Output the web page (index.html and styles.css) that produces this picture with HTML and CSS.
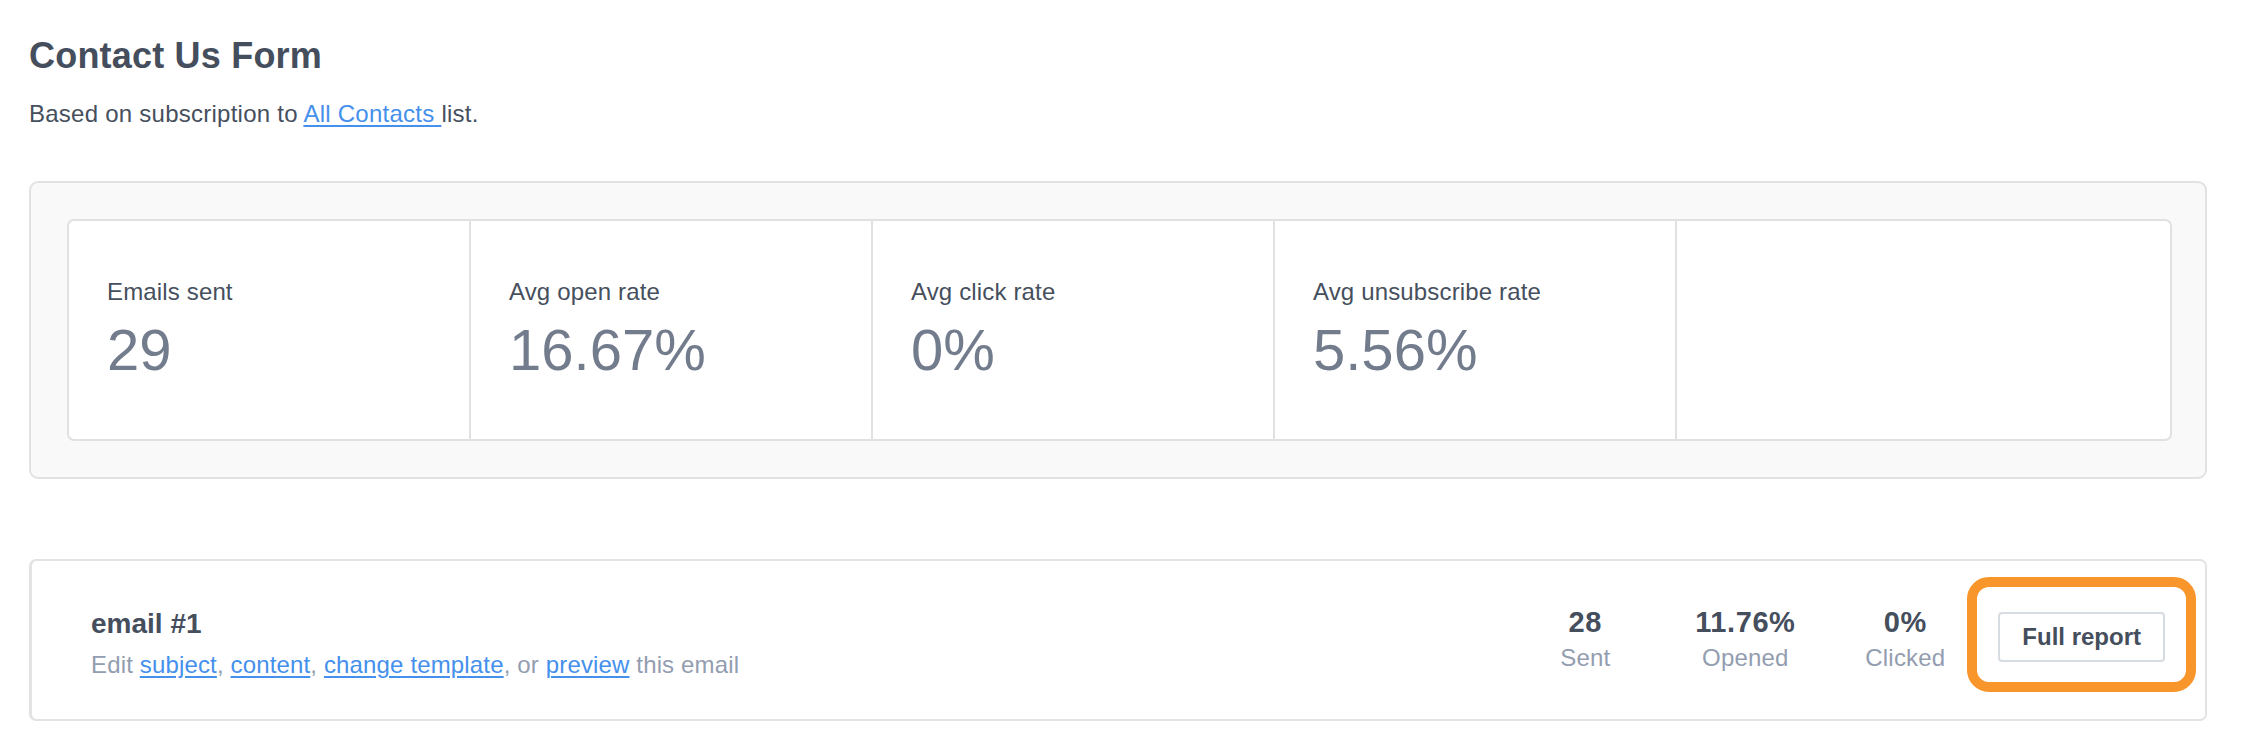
FILE: index.html
```html
<!DOCTYPE html>
<html lang="en">
<head>
<meta charset="utf-8">
<title>Contact Us Form</title>
<link rel="stylesheet" href="styles.css">
</head>
<body>
<div class="page">
  <h1 class="title">Contact Us Form</h1>
  <p class="subtitle">Based on subscription to <a href="#" class="link">All Contacts </a>list.</p>

  <section class="summary">
    <div class="stat-card">
      <div class="stat">
        <div class="stat-label">Emails sent</div>
        <div class="stat-value">29</div>
      </div>
      <div class="stat">
        <div class="stat-label">Avg open rate</div>
        <div class="stat-value">16.67%</div>
      </div>
      <div class="stat">
        <div class="stat-label">Avg click rate</div>
        <div class="stat-value">0%</div>
      </div>
      <div class="stat">
        <div class="stat-label">Avg unsubscribe rate</div>
        <div class="stat-value">5.56%</div>
      </div>
      <div class="stat stat-empty"></div>
    </div>
  </section>

  <section class="email-row">
    <div class="email-info">
      <div class="email-name">email #1</div>
      <div class="email-edit">Edit <a href="#" class="link">subject</a>, <a href="#" class="link">content</a>, <a href="#" class="link">change template</a>, or <a href="#" class="link">preview</a> this email</div>
    </div>
    <div class="email-stats">
      <div class="mini">
        <div class="mini-value">28</div>
        <div class="mini-label">Sent</div>
      </div>
      <div class="mini">
        <div class="mini-value">11.76%</div>
        <div class="mini-label">Opened</div>
      </div>
      <div class="mini">
        <div class="mini-value">0%</div>
        <div class="mini-label">Clicked</div>
      </div>
    </div>
    <div class="report-wrap">
      <button class="report-btn" type="button">Full report</button>
      <span class="highlight"></span>
    </div>
  </section>
</div>
</body>
</html>
```

FILE: styles.css
```css
* {
  box-sizing: border-box;
}

html, body {
  margin: 0;
  padding: 0;
  background: #ffffff;
}

body {
  font-family: "Liberation Sans", Arial, Helvetica, sans-serif;
  color: #464f5d;
}

.page {
  width: 2178px;
  margin-left: 29px;
  padding-top: 34px;
}

.title {
  margin: 0;
  font-size: 36px;
  line-height: 44px;
  font-weight: 700;
  letter-spacing: 0.2px;
  color: #454e5c;
}

.subtitle {
  margin: 18px 0 0;
  font-size: 24px;
  line-height: 36px;
  letter-spacing: 0.25px;
  color: #464f5d;
}

.link {
  color: #4590ec;
  text-decoration: underline;
  text-decoration-thickness: 2px;
  text-underline-offset: 3px;
}

.summary {
  margin-top: 49px;
  background: #f9f9f9;
  border: 2px solid #e2e2e2;
  border-radius: 9px;
  padding: 36px 33px 36px 36px;
}

.stat-card {
  display: flex;
  background: #ffffff;
  border: 2px solid #e1e1e1;
  border-radius: 7px;
}

.stat {
  flex: 0 0 400px;
  padding: 53px 38px;
}

.stat + .stat {
  flex-basis: 402px;
  border-left: 2px solid #e1e1e1;
}

.stat-empty {
  flex: 1 1 auto;
}

.stat-label {
  font-size: 24px;
  line-height: 36px;
  letter-spacing: 0.15px;
  color: #464f5d;
  margin-bottom: 4px;
}

.stat-value {
  font-size: 58px;
  line-height: 72px;
  color: #737c8d;
}

.email-row {
  margin-top: 80px;
  height: 162px;
  display: flex;
  align-items: center;
  border: 2px solid #e3e3e3;
  border-left-width: 3px;
  border-radius: 7px;
  padding: 0 40px 0 59px;
}

.email-info {
  flex: 1 1 auto;
  padding-top: 8px;
}

.email-name {
  font-size: 28px;
  line-height: 36px;
  font-weight: 700;
  color: #454e5c;
  margin-bottom: 5px;
}

.email-edit {
  font-size: 24px;
  line-height: 36px;
  letter-spacing: 0.15px;
  color: #939db0;
}

.email-stats {
  display: flex;
}

.mini {
  width: 160px;
  text-align: center;
}

.mini-value {
  font-size: 29px;
  line-height: 36px;
  font-weight: 700;
  letter-spacing: 0.6px;
  color: #454e5c;
}

.mini-label {
  font-size: 24px;
  line-height: 36px;
  letter-spacing: 0.2px;
  color: #939db0;
}

.report-wrap {
  position: relative;
  margin-left: 13px;
  margin-bottom: 6px;
}

.report-btn {
  display: block;
  height: 50px;
  padding: 0 22px;
  background: #ffffff;
  border: 2px solid #d7dbe2;
  border-radius: 4px;
  font-family: "Liberation Sans", Arial, Helvetica, sans-serif;
  font-size: 24px;
  font-weight: 700;
  color: #454e5c;
}

.highlight {
  position: absolute;
  left: -31px;
  right: -31px;
  top: -35px;
  bottom: -30px;
  border: 10px solid #f8952b;
  border-radius: 22px;
  pointer-events: none;
}
```
